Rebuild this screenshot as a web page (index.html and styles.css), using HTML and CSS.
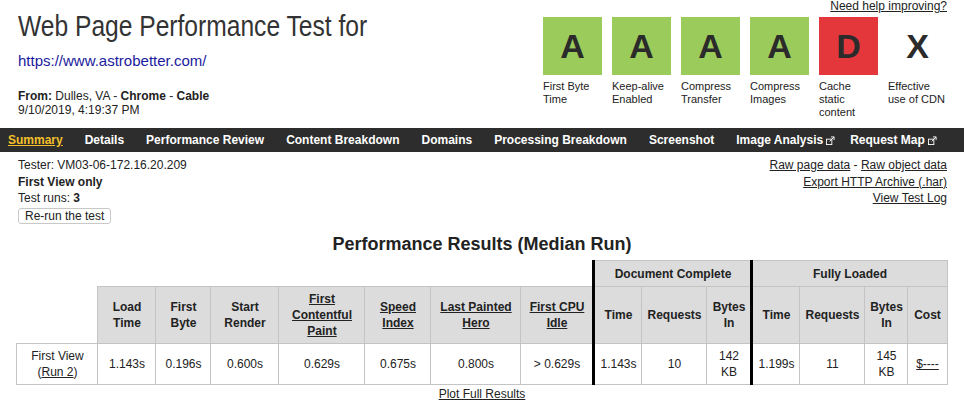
FILE: index.html
```html
<!DOCTYPE html>
<html lang="en">
<head>
    <meta charset="UTF-8">
    <title>WebPageTest Test Result - Dulles : astrobetter.com</title>
    <link rel="stylesheet" href="styles.css">
</head>
<body>
    <header class="top">
        <div class="test-info">
            <h1>Web Page Performance Test for</h1>
            <a class="url" href="#">https://www.astrobetter.com/</a>
            <div class="meta">
                <div><b>From:</b> Dulles, VA - <b>Chrome</b> - <b>Cable</b></div>
                <div>9/10/2019, 4:19:37 PM</div>
            </div>
        </div>
        <div class="grades-wrap">
            <a class="help" href="#">Need help improving?</a>
            <ul class="grades">
                <li><div class="score pass">A</div><div class="label">First Byte Time</div></li>
                <li><div class="score pass">A</div><div class="label">Keep-alive Enabled</div></li>
                <li><div class="score pass">A</div><div class="label">Compress Transfer</div></li>
                <li><div class="score pass">A</div><div class="label">Compress Images</div></li>
                <li><div class="score fail">D</div><div class="label">Cache static content</div></li>
                <li><div class="score">X</div><div class="label">Effective use of CDN</div></li>
            </ul>
        </div>
    </header>

    <nav class="tabs">
        <a class="current" href="#">Summary</a>
        <a href="#">Details</a>
        <a href="#">Performance Review</a>
        <a href="#">Content Breakdown</a>
        <a href="#">Domains</a>
        <a href="#">Processing Breakdown</a>
        <a href="#">Screenshot</a>
        <a class="popup" href="#">Image Analysis<svg class="ext" viewBox="0 0 10 10" width="10" height="10"><rect x="0.5" y="3.5" width="6" height="6" fill="none" stroke="#fff"/><path d="M4 6L9 1M5.5 1H9V4.5" fill="none" stroke="#fff"/></svg></a>
        <a class="popup" href="#">Request Map<svg class="ext" viewBox="0 0 10 10" width="10" height="10"><rect x="0.5" y="3.5" width="6" height="6" fill="none" stroke="#fff"/><path d="M4 6L9 1M5.5 1H9V4.5" fill="none" stroke="#fff"/></svg></a>
    </nav>

    <section class="info">
        <div class="run-info">
            <div>Tester: VM03-06-172.16.20.209</div>
            <div><b>First View only</b></div>
            <div>Test runs: <b>3</b></div>
            <button class="rerun">Re-run the test</button>
        </div>
        <div class="exports">
            <div><a href="#">Raw page data</a> - <a href="#">Raw object data</a></div>
            <div><a href="#">Export HTTP Archive (.har)</a></div>
            <div><a href="#">View Test Log</a></div>
        </div>
    </section>

    <h2>Performance Results (Median Run)</h2>

    <table class="results">
        <colgroup>
            <col style="width:81px"><col style="width:58px"><col style="width:55px"><col style="width:68px">
            <col style="width:86px"><col style="width:66px"><col style="width:90px"><col style="width:73px">
            <col style="width:48px"><col style="width:65px"><col style="width:45px">
            <col style="width:48px"><col style="width:65px"><col style="width:43px"><col style="width:39px">
        </colgroup>
        <tr class="group">
            <td class="blank" colspan="8"></td>
            <th class="split" colspan="3">Document Complete</th>
            <th class="split" colspan="4">Fully Loaded</th>
        </tr>
        <tr class="heads">
            <td class="blank"></td>
            <th>Load Time</th>
            <th>First Byte</th>
            <th>Start Render</th>
            <th><a href="#">First Contentful Paint</a></th>
            <th><a href="#">Speed Index</a></th>
            <th><a href="#">Last Painted Hero</a></th>
            <th><a href="#">First CPU Idle</a></th>
            <th class="split">Time</th>
            <th>Requests</th>
            <th>Bytes In</th>
            <th class="split">Time</th>
            <th>Requests</th>
            <th>Bytes In</th>
            <th>Cost</th>
        </tr>
        <tr class="values">
            <td>First View<br>(<a href="#">Run 2</a>)</td>
            <td>1.143s</td>
            <td>0.196s</td>
            <td>0.600s</td>
            <td>0.629s</td>
            <td>0.675s</td>
            <td>0.800s</td>
            <td>&gt; 0.629s</td>
            <td class="split">1.143s</td>
            <td>10</td>
            <td>142 KB</td>
            <td class="split">1.199s</td>
            <td>11</td>
            <td>145 KB</td>
            <td><a href="#">$----</a></td>
        </tr>
    </table>

    <div class="plot"><a href="#">Plot Full Results</a></div>
</body>
</html>
```

FILE: styles.css
```css
body {
    margin: 0;
    font-family: "Liberation Sans", Arial, sans-serif;
    font-size: 12px;
    color: #222;
    background: #fff;
}

a {
    color: #222;
}

/* header with title + grades */
.top {
    display: flex;
    justify-content: space-between;
    padding: 0 17px 9px 18px;
}

.test-info h1 {
    margin: 9px 0 0;
    font-size: 30px;
    font-weight: normal;
    line-height: 34px;
    color: #333;
    white-space: nowrap;
    transform: scaleX(0.82);
    transform-origin: left center;
}

.url {
    display: block;
    margin-top: 9px;
    font-size: 15px;
    line-height: 18px;
    color: #1a1a9e;
    text-decoration: none;
}

.meta {
    margin-top: 19px;
    line-height: 14px;
}

.grades-wrap {
    display: flex;
    flex-direction: column;
    align-items: flex-end;
}

.help {
    font-size: 12px;
    line-height: 12px;
}

.grades {
    display: flex;
    gap: 10px;
    list-style: none;
    margin: 5px 0 0;
    padding: 0;
}

.grades li {
    width: 59px;
}

.score {
    height: 58px;
    font-size: 34px;
    font-weight: bold;
    line-height: 58px;
    text-align: center;
    color: #2b2b2b;
}

.score.pass {
    background: #9bcc5b;
}

.score.fail {
    background: #e3373c;
}

.label {
    margin-top: 5px;
    font-size: 11px;
    line-height: 13px;
    color: #222;
}

/* tab bar */
.tabs {
    display: flex;
    align-items: center;
    height: 24px;
    background: #2d2d2d;
}

.tabs a {
    padding: 0 11px;
    color: #fff;
    font-weight: bold;
    text-decoration: none;
    line-height: 24px;
    white-space: nowrap;
}

.tabs a:first-child {
    padding-left: 8px;
}

.tabs a.current {
    color: #f4c02a;
    text-decoration: underline;
}

.tabs a.popup {
    padding-right: 4px;
}

.ext {
    width: 9px;
    height: 9px;
    margin-left: 3px;
    vertical-align: -1px;
}

/* run info */
.info {
    display: flex;
    justify-content: space-between;
    padding: 5px 17px 0 18px;
    line-height: 16.5px;
}

.exports {
    text-align: right;
}

.rerun {
    margin-top: 1px;
    padding: 1px 6px;
    border: 1px solid #c8c8c8;
    border-radius: 3px;
    background: #fff;
    font-family: inherit;
    font-size: 12px;
    line-height: 12px;
    color: #222;
}

h2 {
    margin: 10px 0 5px;
    font-size: 18px;
    line-height: 21px;
    text-align: center;
    color: #222;
}

/* results table */
.results {
    width: 930px;
    margin: 0 auto;
    table-layout: fixed;
    border-collapse: collapse;
    line-height: 16px;
    text-align: center;
}

.results th,
.results td {
    padding: 4px;
    border: 1px solid #c4c4c4;
}

.results th {
    background: #dcdcdc;
    font-weight: bold;
}

.results td.blank {
    border: none;
    background: none;
}

.results .group th {
    height: 17px;
}

.results .heads th {
    height: 47px;
}

.results .values td {
    height: 32px;
}

.results .split {
    border-left: 3px solid #000;
}

.plot {
    margin-top: 2px;
    text-align: center;
    line-height: 14px;
}
```
